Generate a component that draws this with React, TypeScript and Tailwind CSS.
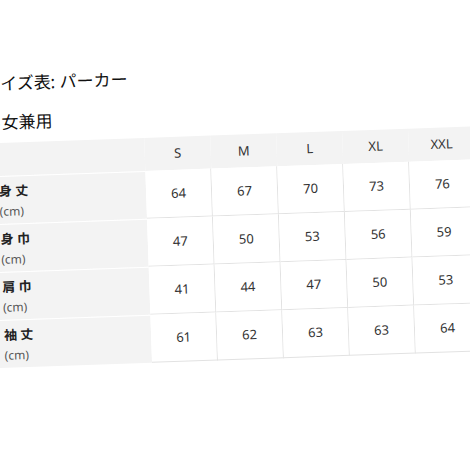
const sizes = ["S", "M", "L", "XL", "XXL"];

const rows: { label: string; values: number[] }[] = [
  { label: "身 丈", values: [64, 67, 70, 73, 76] },
  { label: "身 巾", values: [47, 50, 53, 56, 59] },
  { label: "肩 巾", values: [41, 44, 47, 50, 53] },
  { label: "袖 丈", values: [61, 62, 63, 63, 64] },
];

export default function App() {
  return (
    <div
      className="relative h-[452px] w-[470px] overflow-hidden bg-white text-[#111]"
      style={{ fontFamily: '"Noto Sans", "Noto Sans CJK JP", sans-serif' }}
    >
      <div className="ml-[-11px] w-[560px] origin-[11px_250px] -rotate-2 pt-[72px]">
        <h1 className="text-[17px] leading-[24px] font-normal">サイズ表: パーカー</h1>
        <p className="mt-[15px] text-[17px] leading-[24px]">男女兼用</p>

        <div className="mt-[8px] grid grid-cols-[159px_repeat(6,66px)]">
          {/* header */}
          <div className="h-[33px] bg-[#f3f3f3]" />
          {sizes.map((s) => (
            <div
              key={s}
              className="flex h-[33px] items-center justify-center bg-[#f3f3f3] text-[13px] text-[#333]"
            >
              {s}
            </div>
          ))}
          <div className="h-[33px] bg-[#f3f3f3]" />

          {rows.map((r) => (
            <div key={r.label} className="contents">
              <div className="h-[48px] border-t border-white bg-[#f3f3f3] pl-[12px] pt-[5px]">
                <div className="text-[13px] leading-[18px] font-semibold text-[#222]">{r.label}</div>
                <div className="mt-[3px] text-[12px] leading-[18px] text-[#555]">(cm)</div>
              </div>
              {r.values.map((v, i) => (
                <div
                  key={i}
                  className="flex h-[48px] items-center justify-center border-b border-r border-[#e2e2e2] bg-white text-[13px] text-[#333]"
                >
                  {v}
                </div>
              ))}
              <div className="h-[48px] border-b border-[#e2e2e2] bg-white" />
            </div>
          ))}
        </div>
      </div>
    </div>
  );
}
